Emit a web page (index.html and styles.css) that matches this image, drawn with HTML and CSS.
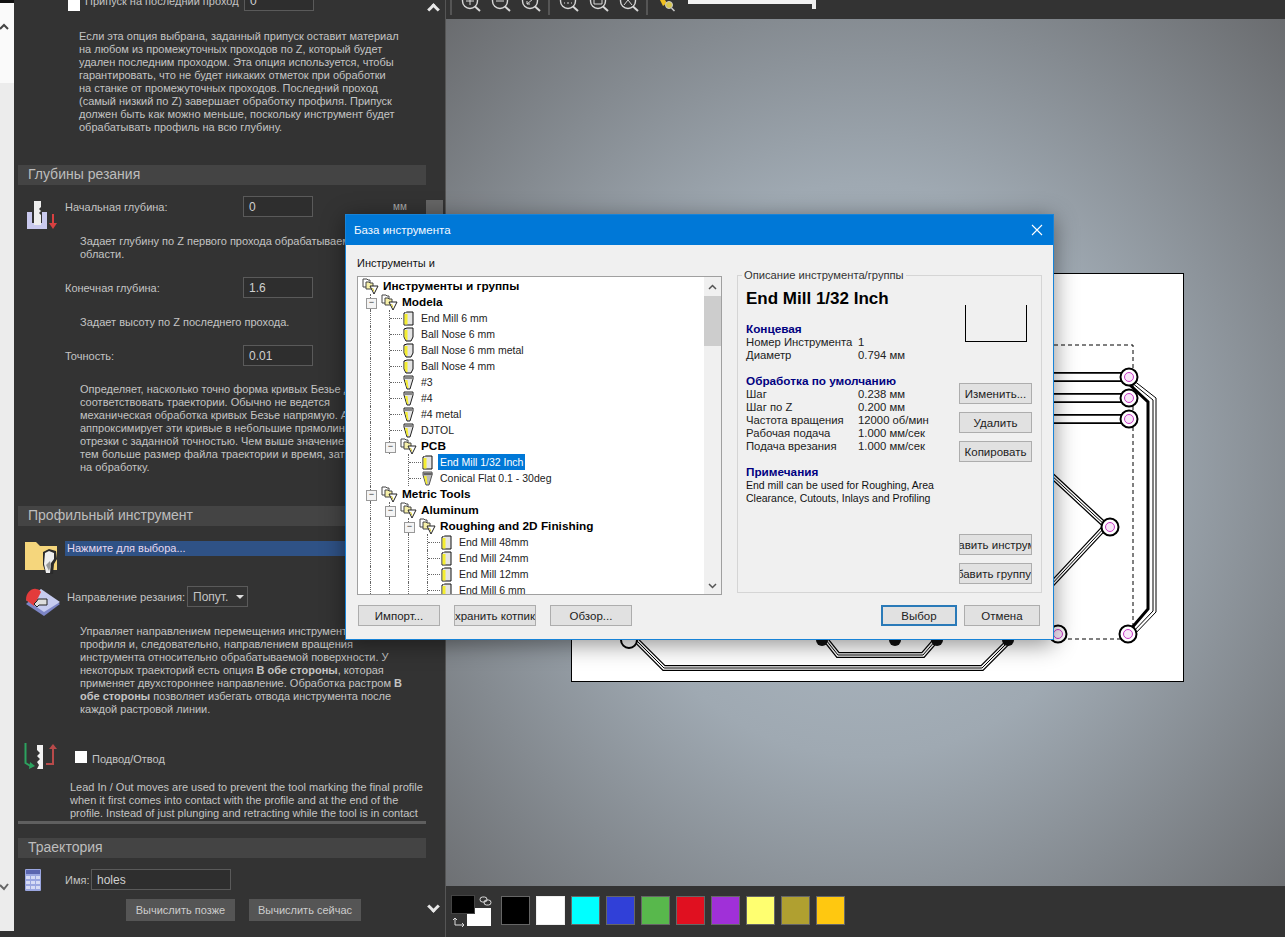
FILE: index.html
```html
<!DOCTYPE html>
<html lang="ru">
<head>
  <meta charset="UTF-8">
  <title>База инструмента</title>
  <link rel="stylesheet" href="styles.css">
</head>
<body>

<!-- shared tree icons -->
<svg class="defs" width="0" height="0">
  <symbol id="ico-group" viewBox="0 0 17 17">
    <path d="M1 1h4l1 1h2v7H1z" fill="#fff" stroke="#444"/>
    <path d="M4 4h3l1 1h3v6H4z" fill="#f6f0a8" stroke="#444"/>
    <path d="M8 8h8l-4 8z" fill="#fff" stroke="#222"/>
    <path d="M10.500 10l1.500 3.500" stroke="#d8c820"/>
  </symbol>
  <symbol id="ico-mill" viewBox="0 0 11 15">
    <path d="M1 2l3-1 6 0v13H1z" fill="#e4e4e4" stroke="#111"/>
    <path d="M1.500 3h3v10.500h-3z" fill="#f5ee30"/>
    <path d="M2 1.500h4" stroke="#777"/>
  </symbol>
  <symbol id="ico-ball" viewBox="0 0 11 15">
    <path d="M1 2l3-1 6 0v9l-2 4H3l-2-4z" fill="#e4e4e4" stroke="#111"/>
    <path d="M1.500 3h3v10h-1.500l-1.500-3z" fill="#f5ee30"/>
  </symbol>
  <symbol id="ico-cone" viewBox="0 0 11 15">
    <path d="M1 1h9v3l-3 10H4L1 4z" fill="#e4e4e4" stroke="#222"/>
    <path d="M1.500 2h9v2h-9z" fill="#888"/>
    <path d="M2 5l2 8h1.500L4.500 5z" fill="#f5ee30"/>
  </symbol>
  <symbol id="ico-cone-grey" viewBox="0 0 11 15">
    <path d="M1 1h9v3l-3 10H4L1 4z" fill="#bbb" stroke="#555"/>
    <path d="M1.500 2h9v2h-9z" fill="#666"/>
    <path d="M2 5l2 8h1.500L4.500 5z" fill="#f5ee30"/>
  </symbol>
  <symbol id="ico-zoom" viewBox="0 0 22 19">
    <circle cx="10" cy="1" r="7.500" fill="none" stroke="#d8d8d8" stroke-width="1.400"/>
    <path d="M15 6.500l5 4.500" stroke="#d8d8d8" stroke-width="2"/>
  </symbol>
</svg>

<div class="strip">
  <div class="strip-top"></div>
  <div class="strip-white">
    <svg class="strip-up" width="10" height="7" viewBox="0 0 10 7"><path d="M0 6l4-4 4 4" fill="none" stroke="#444" stroke-width="2"/></svg>
  </div>
  <div class="strip-grey">
    <svg class="strip-tick" width="10" height="8" viewBox="0 0 10 8"><path d="M0 2l4 4 4-5" fill="none" stroke="#666" stroke-width="2"/></svg>
  </div>
</div>

<aside class="panel">
  <div class="form">
    <div class="row row-first">
      <span class="check check-pass"></span>
      <span class="pass-label">Припуск на последний проход</span>
      <span class="field">0</span>
    </div>

    <p class="note note-top">Если эта опция выбрана, заданный припуск оставит материал<br>
    на любом из промежуточных проходов по Z, который будет<br>
    удален последним проходом. Эта опция используется, чтобы<br>
    гарантировать, что не будет никаких отметок при обработки<br>
    на станке от промежуточных проходов. Последний проход<br>
    (самый низкий по Z) завершает обработку профиля. Припуск<br>
    должен быть как можно меньше, поскольку инструмент будет<br>
    обрабатывать профиль на всю глубину.</p>

    <h3 class="bar bar-depth">Глубины резания</h3>

    <div class="row row-start">
      <svg class="row-icon icon-depth" width="32" height="30" viewBox="0 0 32 30" preserveAspectRatio="xMinYMin">
        <path d="M1 12h5v11h10V12h5v17H1z" fill="#c9c9ee"/>
        <path d="M8 1h7v6l-2 2 2 2-2 2 2 2v10H8z" fill="#eee"/>
        <path d="M27 14v12" stroke="#d84040" stroke-width="2"/>
        <path d="M23 23l4 6 4-6z" fill="#d84040"/>
      </svg>
      <label class="row-label">Начальная глубина:</label>
      <span class="field">0</span>
      <span class="unit">мм</span>
    </div>
    <p class="note note-a">Задает глубину по Z первого прохода обрабатываемой<br>области.</p>

    <div class="row row-end">
      <span class="row-icon"></span>
      <label class="row-label">Конечная глубина:</label>
      <span class="field">1.6</span>
    </div>
    <p class="note note-a">Задает высоту по Z последнего прохода.</p>

    <div class="row row-tol">
      <span class="row-icon"></span>
      <label class="row-label">Точность:</label>
      <span class="field">0.01</span>
    </div>
    <p class="note note-b">Определяет, насколько точно форма кривых Безье должна<br>
    соответствовать траектории. Обычно не ведется<br>
    механическая обработка кривых Безье напрямую. А<br>
    аппроксимирует эти кривые в небольшие прямолинейные<br>
    отрезки с заданной точностью. Чем выше значение,<br>
    тем больше размер файла траектории и время, затраченное<br>
    на обработку.</p>

    <h3 class="bar bar-tool">Профильный инструмент</h3>

    <div class="row row-pick">
      <svg class="row-icon" width="33" height="35" viewBox="0 0 33 35" preserveAspectRatio="xMinYMin">
        <path d="M0 1h11l4 4h17v24H0z" fill="#f5d67c"/>
        <path d="M18 11l6-3 7 2 1 8-3 5-1 10h-7l-3-9z" fill="#2a2a2a"/>
        <path d="M20 12l4-2 5 2 0 6-3 4-1 10h-4l-2-9z" fill="#eee"/>
        <path d="M21 24l4-4 1 4-2 6z" fill="#999"/>
      </svg>
      <div class="pick">Нажмите для выбора...</div>
    </div>

    <div class="row row-dir">
      <svg class="row-icon" width="35" height="29" viewBox="0 0 35 29" preserveAspectRatio="xMinYMin">
        <path d="M0 16l15-13 19 13-16 12z" fill="#7d86c6"/>
        <path d="M0 12l15-11 19 13-16 10z" fill="#c6cbef"/>
        <path d="M0 12c0-8 6-12 10-11 2 0 4 1 5 3L8 18z" fill="#e33b3b"/>
        <path d="M12 11h9v6h-8l-2 2-3-3 3-3z" fill="#ddd" stroke="#222"/>
      </svg>
      <label class="dir-label">Направление резания:</label>
      <span class="select">Попут.<i class="caret"></i></span>
    </div>
    <p class="note">Управляет направлением перемещения инструмента вдоль<br>
    профиля и, следовательно, направлением вращения<br>
    инструмента относительно обрабатываемой поверхности. У<br>
    некоторых траекторий есть опция <b>В обе стороны</b>, которая<br>
    применяет двухстороннее направление. Обработка растром <b>В</b><br>
    <b>обе стороны</b> позволяет избегать отвода инструмента после<br>
    каждой растровой линии.</p>

    <div class="row row-lead">
      <svg class="row-icon" width="33" height="27" viewBox="0 0 33 27" preserveAspectRatio="xMinYMin">
        <path d="M1.500 0v20l5 3" fill="none" stroke="#2ca25f" stroke-width="2"/>
        <path d="M6 19l5 4-6 3z" fill="#2ca25f"/>
        <path d="M13 2h6v24h-6l2-4-2-3 3-3-3-3 3-3-3-3z" fill="#f2f2f2"/>
        <path d="M22 21h7V4" fill="none" stroke="#b84a4a" stroke-width="2"/>
        <path d="M25 6l4-5 4 5z" fill="#b84a4a"/>
      </svg>
      <span class="check check-lead"></span>
      <span class="lead-label">Подвод/Отвод</span>
    </div>
    <p class="note note-lead">Lead In / Out moves are used to prevent the tool marking the final profile<br>
    when it first comes into contact with the profile and at the end of the<br>
    profile. Instead of just plunging and retracting while the tool is in contact</p>
    <div class="rule"></div>

    <h3 class="bar bar-path">Траектория</h3>
    <div class="row row-name">
      <svg class="row-icon" width="16" height="22" viewBox="0 0 16 22">
        <rect width="16" height="22" rx="1" fill="#9aa6e0"/>
        <rect x="1" y="1" width="14" height="4" fill="#5b66b0"/>
        <path d="M1 7h4v3H1zm5 0h4v3H6zm5 0h4v3h-4zM1 12h4v3H1zm5 0h4v3H6zm5 0h4v3h-4zM1 17h4v3H1zm5 0h4v3H6zm5 0h4v3h-4z" fill="#d6dbf5"/>
      </svg>
      <label class="name-label">Имя:</label>
      <span class="field field-name">holes</span>
    </div>
    <div class="calc-btns">
      <span class="dark-btn">Вычислить позже</span>
      <span class="dark-btn">Вычислить сейчас</span>
    </div>
  </div>

  <div class="panel-scroll">
    <span class="chev chev-up"></span>
    <span class="thumb"></span>
    <span class="chev chev-down"></span>
  </div>
</aside>

<main class="main">
  <div class="toolbar">
    <i class="tool-sep"></i>
    <svg class="zoom-ico" width="22" height="19"><use href="#ico-zoom"/><path d="M6 1h8M10 0v5" stroke="#d8d8d8"/></svg>
    <svg class="zoom-ico" width="22" height="19"><use href="#ico-zoom"/><path d="M6 1h8" stroke="#d8d8d8"/></svg>
    <svg class="zoom-ico" width="22" height="19"><use href="#ico-zoom"/><path d="M7 4l6-5M7 1v3h3" fill="none" stroke="#d8d8d8"/></svg>
    <i class="tool-sep sep-tight"></i>
    <svg class="zoom-ico" width="22" height="19"><use href="#ico-zoom"/><path d="M6 3h1M9 3h2M13 3h1" stroke="#d8d8d8"/></svg>
    <svg class="zoom-ico" width="22" height="19"><use href="#ico-zoom"/><path d="M6 0v4h8V0" fill="none" stroke="#d8d8d8"/></svg>
    <svg class="zoom-ico" width="22" height="19"><use href="#ico-zoom"/><path d="M6 5l4-5 4 5" fill="none" stroke="#d8d8d8"/></svg>
    <i class="tool-sep sep-tight"></i>
    <svg class="layer-ico" width="16" height="12" viewBox="0 0 16 12">
      <path d="M1 0h5l2 3-4 3z" fill="#f0c020"/>
      <circle cx="10" cy="5" r="3.500" fill="#d8c850" stroke="#ccc"/>
      <path d="M12.500 8l3 3" stroke="#ccc" stroke-width="1.500"/>
    </svg>
    <div class="slider"><i class="slider-thumb"></i></div>
  </div>

  <div class="canvas">
    <div class="sheet">
      <svg width="612" height="408" viewBox="571 273 612 408">
        <!-- job outline -->
        <path d="M1054 345H1133V639H620" fill="none" stroke="#000" stroke-dasharray="4 3"/>
        <!-- horizontal tracks -->
        <g fill="none" stroke="#000" stroke-width="10">
          <path d="M1050 377H1129"/>
          <path d="M1050 398H1129"/>
          <path d="M1050 419H1129"/>
        </g>
        <g fill="none" stroke="#fff" stroke-width="6.500">
          <path d="M1050 377H1129"/>
          <path d="M1050 398H1129"/>
          <path d="M1050 419H1129"/>
        </g>
        <!-- long track down the right side -->
        <g fill="none" stroke="#000">
          <path d="M1133 380L1156 398V612L1133 636"/>
          <path d="M1131 382L1153 400V611L1131 634"/>
          <path d="M1130 385L1148 402V609L1130 630" stroke-width="3"/>
        </g>
        <g fill="none" stroke="#000" stroke-width="6">
          <path d="M1050 474L1106 526L1050 586"/>
          <path d="M636 640L664 668H982L1010 640"/>
          <path d="M826 640L838 655H923L936 640"/>
        </g>
        <g fill="none" stroke="#fff" stroke-width="3.500">
          <path d="M1050 474L1106 526L1050 586"/>
          <path d="M636 640L664 668H982L1010 640"/>
          <path d="M826 640L838 655H923L936 640"/>
        </g>
        <g fill="none" stroke="#000" stroke-width="1">
          <path d="M1050 474L1106 526L1050 586"/>
          <path d="M636 640L664 668H982L1010 640"/>
          <path d="M826 640L838 655H923L936 640"/>
        </g>
        <g fill="#111">
          <circle cx="822" cy="640" r="6"/>
          <circle cx="895" cy="640" r="6"/>
          <circle cx="937" cy="640" r="6"/>
          <circle cx="1008" cy="640" r="6"/>
        </g>
        <g fill="#fff" stroke="#000" stroke-width="2">
          <circle cx="1129" cy="377" r="8.500"/>
          <circle cx="1129" cy="398" r="8.500"/>
          <circle cx="1129" cy="419" r="8.500"/>
          <circle cx="1110" cy="527" r="8.500"/>
          <circle cx="1128" cy="634" r="8.500"/>
          <circle cx="1058" cy="634" r="8.500"/>
          <circle cx="629" cy="640" r="8"/>
        </g>
        <g fill="#f8e8f8" stroke="#c838c8">
          <circle cx="1129" cy="377" r="4.500"/>
          <circle cx="1129" cy="398" r="4.500"/>
          <circle cx="1129" cy="419" r="4.500"/>
          <circle cx="1110" cy="527" r="4.500"/>
          <circle cx="1128" cy="634" r="4.500"/>
          <circle cx="1058" cy="634" r="4.500"/>
        </g>
      </svg>
    </div>
  </div>

  <div class="footer">
    <div class="colors">
      <span class="col-fg"></span>
      <span class="col-bg"></span>
      <svg class="col-link" width="13" height="10" viewBox="0 0 13 10">
        <rect x="1" y="1" width="7" height="5" rx="2.500" fill="none" stroke="#ddd"/>
        <rect x="5" y="4" width="7" height="5" rx="2.500" fill="none" stroke="#ddd"/>
      </svg>
      <svg class="col-swap" width="13" height="10" viewBox="0 0 13 10">
        <path d="M3 2v6h9M1 3l2-2 2 2M10 6l2 2-2 2" fill="none" stroke="#ddd"/>
      </svg>
    </div>
    <div class="swatches">
      <span class="swatch sw-black"></span>
      <span class="swatch sw-white"></span>
      <span class="swatch sw-cyan"></span>
      <span class="swatch sw-blue"></span>
      <span class="swatch sw-green"></span>
      <span class="swatch sw-red"></span>
      <span class="swatch sw-purple"></span>
      <span class="swatch sw-yellow"></span>
      <span class="swatch sw-olive"></span>
      <span class="swatch sw-gold"></span>
    </div>
  </div>
</main>

<section class="dialog">
  <header class="dlg-title">
    <span>База инструмента</span>
    <svg class="dlg-close" width="12" height="12" viewBox="0 0 12 12">
      <path d="M1 1l10 10M11 1L1 11" stroke="#fff" stroke-width="1.100"/>
    </svg>
  </header>

  <div class="dlg-body">
    <div class="dlg-left">
      <div class="tree-caption">Инструменты и</div>
      <div class="tree">
        <div class="tree-rows">
          <div class="node group"><svg class="ig"><use href="#ico-group"/></svg><span>Инструменты и группы</span></div>
          <div class="node group"><i class="cell exp"></i><svg class="ig"><use href="#ico-group"/></svg><span>Modela</span></div>
          <div class="node"><i class="cell v"></i><i class="cell tee"></i><svg class="it"><use href="#ico-mill"/></svg><span>End Mill 6 mm</span></div>
          <div class="node"><i class="cell v"></i><i class="cell tee"></i><svg class="it"><use href="#ico-ball"/></svg><span>Ball Nose 6 mm</span></div>
          <div class="node"><i class="cell v"></i><i class="cell tee"></i><svg class="it"><use href="#ico-ball"/></svg><span>Ball Nose 6 mm metal</span></div>
          <div class="node"><i class="cell v"></i><i class="cell tee"></i><svg class="it"><use href="#ico-ball"/></svg><span>Ball Nose 4 mm</span></div>
          <div class="node"><i class="cell v"></i><i class="cell tee"></i><svg class="it"><use href="#ico-cone"/></svg><span>#3</span></div>
          <div class="node"><i class="cell v"></i><i class="cell tee"></i><svg class="it"><use href="#ico-cone"/></svg><span>#4</span></div>
          <div class="node"><i class="cell v"></i><i class="cell tee"></i><svg class="it"><use href="#ico-cone"/></svg><span>#4 metal</span></div>
          <div class="node"><i class="cell v"></i><i class="cell tee"></i><svg class="it"><use href="#ico-cone"/></svg><span>DJTOL</span></div>
          <div class="node group"><i class="cell v"></i><i class="cell exp"></i><svg class="ig"><use href="#ico-group"/></svg><span>PCB</span></div>
          <div class="node"><i class="cell v"></i><i class="cell"></i><i class="cell tee"></i><svg class="it"><use href="#ico-mill"/></svg><span class="selected">End Mill 1/32 Inch</span></div>
          <div class="node"><i class="cell v"></i><i class="cell"></i><i class="cell tee"></i><svg class="it"><use href="#ico-cone-grey"/></svg><span>Conical Flat 0.1 - 30deg</span></div>
          <div class="node group"><i class="cell exp"></i><svg class="ig"><use href="#ico-group"/></svg><span>Metric Tools</span></div>
          <div class="node group"><i class="cell v"></i><i class="cell exp"></i><svg class="ig"><use href="#ico-group"/></svg><span>Aluminum</span></div>
          <div class="node group"><i class="cell v"></i><i class="cell v"></i><i class="cell exp"></i><svg class="ig"><use href="#ico-group"/></svg><span>Roughing and 2D Finishing</span></div>
          <div class="node"><i class="cell v"></i><i class="cell v"></i><i class="cell v"></i><i class="cell tee"></i><svg class="it"><use href="#ico-mill"/></svg><span>End Mill 48mm</span></div>
          <div class="node"><i class="cell v"></i><i class="cell v"></i><i class="cell v"></i><i class="cell tee"></i><svg class="it"><use href="#ico-mill"/></svg><span>End Mill 24mm</span></div>
          <div class="node"><i class="cell v"></i><i class="cell v"></i><i class="cell v"></i><i class="cell tee"></i><svg class="it"><use href="#ico-mill"/></svg><span>End Mill 12mm</span></div>
          <div class="node"><i class="cell v"></i><i class="cell v"></i><i class="cell v"></i><i class="cell tee"></i><svg class="it"><use href="#ico-mill"/></svg><span>End Mill 6 mm</span></div>
        </div>
        <div class="tree-scroll">
          <svg width="17" height="17" viewBox="0 0 17 17"><path d="M5 10l3.500-3.500L12 10" fill="none" stroke="#555" stroke-width="1.500"/></svg>
          <i class="tree-thumb"></i>
          <svg class="tree-down" width="17" height="17" viewBox="0 0 17 17"><path d="M5 7l3.500 3.500L12 7" fill="none" stroke="#555" stroke-width="1.500"/></svg>
        </div>
      </div>
    </div>

    <fieldset class="info">
      <legend>Описание инструмента/группы</legend>
      <div class="info-text">
        <h2>End Mill 1/32 Inch</h2>
        <h4>Концевая</h4>
        <div class="kv"><span>Номер Инструмента</span><span>1</span></div>
        <div class="kv"><span>Диаметр</span><span>0.794 мм</span></div>
        <h4>Обработка по умолчанию</h4>
        <div class="kv"><span>Шаг</span><span>0.238 мм</span></div>
        <div class="kv"><span>Шаг по Z</span><span>0.200 мм</span></div>
        <div class="kv"><span>Частота вращения</span><span>12000 об/мин</span></div>
        <div class="kv"><span>Рабочая подача</span><span>1.000 мм/сек</span></div>
        <div class="kv"><span>Подача врезания</span><span>1.000 мм/сек</span></div>
        <h4>Примечания</h4>
        <p>End mill can be used for Roughing, Area<br>Clearance, Cutouts, Inlays and Profiling</p>
      </div>
      <div class="info-side">
        <div class="tool-shape"></div>
        <span class="btn btn-side btn-edit">Изменить...</span>
        <span class="btn btn-side">Удалить</span>
        <span class="btn btn-side">Копировать</span>
        <span class="btn btn-side btn-add">Добавить инструмент</span>
        <span class="btn btn-side btn-end">Добавить группу</span>
      </div>
    </fieldset>
  </div>

  <div class="dlg-actions">
    <span class="btn btn-low">Импорт...</span>
    <span class="btn btn-low btn-end">Сохранить котпик</span>
    <span class="btn btn-low">Обзор...</span>
    <span class="btn btn-low btn-ok">Выбор</span>
    <span class="btn btn-low">Отмена</span>
  </div>
</section>

</body>
</html>
```

FILE: styles.css
```css
* {
  box-sizing: border-box;
}

html, body {
  margin: 0;
  height: 100%;
}

body {
  width: 1285px;
  height: 937px;
  display: flex;
  overflow: hidden;
  position: relative;
  background: #333;
  font-family: "Liberation Sans", Arial, sans-serif;
  font-size: 11px;
  color: #c4c4c4;
}

.defs {
  position: absolute;
}

/* far left sliver of the other window */
.strip {
  width: 14px;
  height: 931px;
  display: flex;
  flex-direction: column;
  flex: none;
}

.strip-top {
  height: 3px;
  background: #111;
}

.strip-white {
  height: 80px;
  padding-top: 20px;
  background: #fafafa;
}

.strip-grey {
  flex: 1;
  padding-top: 800px;
  background: #ececec;
}

.strip-up,
.strip-tick {
  display: block;
}

/* left panel */
.panel {
  width: 432px;
  flex: none;
  display: flex;
  background: #333;
  overflow: hidden;
}

.form {
  width: 412px;
  padding-left: 4px;
  flex: none;
}

.panel-scroll {
  width: 20px;
  border-right: 1px solid #555;
  position: relative;
}

.chev {
  position: absolute;
  left: 3px;
  width: 9px;
  height: 9px;
  border-top: 3px solid #e8e8e8;
  border-left: 3px solid #e8e8e8;
  transform: rotate(45deg);
}

.chev-up {
  top: 5px;
}

.chev-down {
  top: 902px;
  transform: rotate(225deg);
}

.thumb {
  position: absolute;
  left: 0;
  top: 200px;
  width: 17px;
  height: 90px;
  background: #666;
}

.row {
  display: flex;
  align-items: center;
  height: 21px;
}

.row-first {
  margin-top: -10px;
  padding-left: 50px;
}

.row-start {
  margin-top: 11px;
}

.row-end {
  margin-top: 16px;
}

.row-tol {
  margin-top: 16px;
}

.row-icon {
  width: 40px;
  margin-left: 7px;
  flex: none;
  align-self: flex-start;
}

.icon-depth {
  margin-top: 4px;
  margin-left: 8px;
  width: 39px;
}

.row-label {
  width: 178px;
  flex: none;
}

.field {
  display: flex;
  align-items: center;
  width: 70px;
  height: 21px;
  padding-left: 5px;
  border: 1px solid #5a5a5a;
  font-size: 12px;
  color: #d0d0d0;
  background: #2e2e2e;
}

.unit {
  margin-left: 80px;
  font-size: 10px;
  color: #aaa;
}

.check {
  width: 12px;
  height: 12px;
  flex: none;
  background: #fff;
}

.check-pass {
  margin-top: 8px;
}

.pass-label {
  width: 159px;
  margin-left: 5px;
}

.note {
  margin: 18px 0 0 62px;
  line-height: 13px;
  white-space: nowrap;
}

.note-top {
  margin: 19px 0 0 61px;
}

.note-b {
  margin-top: 17px;
}

.note-lead {
  margin: 11px 0 0 52px;
}

.bar {
  height: 20px;
  margin: 0;
  padding-left: 10px;
  background: #444;
  font-size: 14px;
  font-weight: 400;
  line-height: 18px;
  color: #bdbdbd;
}

.bar-depth {
  margin-top: 31px;
}

.bar-tool {
  margin-top: 32px;
}

.bar-path {
  margin-top: 14px;
}

.rule {
  height: 3px;
  margin-top: 1px;
  background: #5f5f5f;
}

.row-pick {
  margin-top: 15px;
  height: 15px;
}

.pick {
  flex: 1;
  height: 15px;
  padding-left: 2px;
  line-height: 15px;
  background: #2f5286;
  color: #e6d8ee;
}

.row-dir {
  margin-top: 30px;
}

.row-dir .row-icon {
  margin-top: 2px;
  margin-left: 8px;
  width: 35px;
}

.dir-label {
  width: 120px;
  margin-left: 6px;
  flex: none;
  font-size: 11.200px;
}

.select {
  display: flex;
  align-items: center;
  width: 61px;
  height: 21px;
  padding-left: 5px;
  border: 1px solid #5a5a5a;
  font-size: 12px;
}

.caret {
  width: 0;
  height: 0;
  margin-left: 8px;
  border: 4px solid transparent;
  border-top: 4px solid #ddd;
  border-bottom: 0;
}

.row-lead {
  margin-top: 27px;
  height: 27px;
  align-items: flex-start;
}

.row-lead .row-icon {
  margin-left: 6px;
  width: 33px;
}

.check-lead {
  margin: 8px 0 0 18px;
}

.lead-label {
  margin: 10px 0 0 5px;
}

.row-name {
  margin-top: 11px;
}

.row-name .row-icon {
  width: 16px;
}

.name-label {
  width: 26px;
  margin-left: 24px;
  flex: none;
}

.field-name {
  width: 140px;
}

.calc-btns {
  display: flex;
  gap: 14px;
  margin: 9px 0 0 108px;
}

.dark-btn {
  display: flex;
  align-items: center;
  justify-content: center;
  width: 109px;
  height: 22px;
  background: #555;
  color: #ccc;
}

.dark-btn + .dark-btn {
  width: 112px;
}

/* right side */
.main {
  flex: 1;
  display: flex;
  flex-direction: column;
}

.toolbar {
  height: 19px;
  display: flex;
  align-items: flex-start;
  overflow: hidden;
  background: #333;
  padding-left: 4px;
  gap: 8px;
}

.tool-sep {
  width: 2px;
  height: 15px;
  flex: none;
  background: #555;
}

.sep-tight {
  margin-left: -2px;
}

.zoom-ico {
  flex: none;
}

.layer-ico {
  margin-left: 3px;
  flex: none;
}

.slider {
  position: relative;
  width: 124px;
  height: 4px;
  margin-left: 5px;
  background: #f2f2f2;
}

.slider-thumb {
  position: absolute;
  right: -4px;
  top: 0;
  width: 4px;
  height: 9px;
  background: #eee;
}

.canvas {
  flex: 1;
  position: relative;
  background: radial-gradient(ellipse at 50% 52%, #b1bdc7 0%, #9fa9b2 45%, #6a6c6f 100%);
}

.sheet {
  position: absolute;
  left: 125px;
  top: 254px;
  width: 613px;
  height: 409px;
  background: #fff;
  border: 1px solid #000;
  overflow: hidden;
}

.sheet svg {
  display: block;
  margin: -1px;
}

.footer {
  height: 51px;
  display: flex;
  background: #333;
}

.colors {
  position: relative;
  width: 50px;
  margin-left: 5px;
  flex: none;
}

.col-fg {
  position: absolute;
  left: 0;
  top: 9px;
  width: 24px;
  height: 19px;
  background: #000;
  border: 1px solid #444;
  z-index: 1;
}

.col-bg {
  position: absolute;
  left: 16px;
  top: 22px;
  width: 24px;
  height: 18px;
  background: #fff;
}

.col-link {
  position: absolute;
  left: 28px;
  top: 10px;
}

.col-swap {
  position: absolute;
  left: 1px;
  top: 31px;
}

.swatches {
  display: flex;
  gap: 6px;
  margin-top: 10px;
}

.swatch {
  width: 29px;
  height: 29px;
  border: 1px solid #666;
}

.sw-black { background: #000; }
.sw-white { background: #fff; border-color: #eee; }
.sw-cyan { background: #0ff; }
.sw-blue { background: #3040d8; }
.sw-green { background: #58b84c; }
.sw-red { background: #e01020; }
.sw-purple { background: #a030d8; }
.sw-yellow { background: #ffff70; }
.sw-olive { background: #b0a030; }
.sw-gold { background: #ffc810; }

/* dialog */
.dialog {
  position: absolute;
  left: 345px;
  top: 214px;
  width: 709px;
  height: 426px;
  display: flex;
  flex-direction: column;
  background: #f0f0f0;
  border: 1px solid #1883d7;
  box-shadow: 0 4px 22px rgba(0, 0, 0, 0.45);
  color: #111;
}

.dlg-title {
  height: 30px;
  display: flex;
  align-items: center;
  justify-content: space-between;
  padding: 0 10px 0 8px;
  background: #0078d7;
  color: #f4f8ff;
  font-size: 11.500px;
  flex: none;
}

.dlg-body {
  display: flex;
  gap: 15px;
  padding-left: 11px;
  flex: none;
}

.dlg-left {
  width: 365px;
  flex: none;
}

.tree-caption {
  height: 31px;
  padding-top: 12px;
  line-height: 13px;
}

.tree {
  height: 319px;
  display: flex;
  background: #fff;
  border: 1px solid #a0a0a0;
  overflow: hidden;
}

.tree-rows {
  flex: 1;
  padding: 1px 0 0 3px;
  overflow: hidden;
}

.node {
  display: flex;
  align-items: center;
  height: 16px;
  line-height: 16px;
  font-size: 10.500px;
  white-space: nowrap;
  color: #222;
}

.node span {
  margin-left: 3px;
}

.group {
  font-size: 11.800px;
  font-weight: 700;
  color: #000;
}

.cell {
  position: relative;
  width: 19px;
  height: 16px;
  flex: none;
}

.v::before,
.tee::before,
.exp::before {
  content: "";
  position: absolute;
  left: 9px;
  top: 0;
  bottom: 0;
  border-left: 1px dotted #666;
}

.tee::after {
  content: "";
  position: absolute;
  left: 10px;
  right: -3px;
  top: 8px;
  border-top: 1px dotted #666;
}

.exp::after {
  content: "\2212";
  position: absolute;
  left: 5px;
  top: 4px;
  width: 9px;
  height: 9px;
  border: 1px solid #999;
  background: #f4f4f4;
  color: #333;
  font-size: 9px;
  font-weight: 400;
  line-height: 7px;
  text-align: center;
}

.ig {
  width: 17px;
  height: 17px;
  margin-left: 1px;
  margin-right: 1px;
  flex: none;
}

.it {
  width: 11px;
  height: 15px;
  margin-left: 4px;
  flex: none;
}

.it + span {
  margin-left: 7px;
}

.node .selected {
  margin-left: 5px;
  padding: 0 2px;
  background: #0078d7;
  color: #fff;
}

.tree-scroll {
  position: relative;
  width: 17px;
  flex: none;
  background: #f0f0f0;
}

.tree-scroll svg {
  display: block;
  margin-top: 2px;
}

.tree-thumb {
  display: block;
  height: 50px;
  background: #cdcdcd;
}

.tree-scroll .tree-down {
  position: absolute;
  left: 0;
  bottom: 0;
}

.info {
  width: 305px;
  height: 324px;
  margin: 24px 0 0;
  padding: 0 9px 0 8px;
  display: flex;
  justify-content: space-between;
  border: 1px solid #d5d5d5;
  min-inline-size: 0;
}

.info legend {
  margin-left: -4px;
  padding: 0 2px;
  line-height: 13px;
  font-size: 11.200px;
  color: #333;
}

.info-text {
  width: 205px;
  line-height: 13px;
}

.info-text h2 {
  margin: 7px 0 0;
  font-size: 17px;
  line-height: 20px;
  color: #000;
}

.info-text h4 {
  margin: 13px 0 1px;
  font-size: 11.750px;
  font-weight: 700;
  color: #000080;
}

.info-text .kv + h4 {
  margin-top: 12px;
}

.info-text p {
  margin: 0;
  font-size: 10.500px;
}

.kv {
  display: grid;
  grid-template-columns: 112px 1fr;
  font-size: 11.300px;
  color: #222;
}

.info-side {
  width: 73px;
  display: flex;
  flex-direction: column;
  align-items: stretch;
}

.tool-shape {
  width: 62px;
  height: 37px;
  margin: 23px 0 0 6px;
  border: 1px solid #000;
  border-top: 0;
}

.btn {
  display: flex;
  align-items: center;
  justify-content: center;
  height: 21px;
  background: #e1e1e1;
  border: 1px solid #adadad;
  color: #222;
  font-size: 11.500px;
  white-space: nowrap;
  overflow: hidden;
  flex: none;
}

.btn-end {
  justify-content: flex-end;
}

.btn-side {
  margin-top: 8px;
}

.btn-edit {
  margin-top: 41px;
}

.btn-add {
  margin-top: 72px;
}

.dlg-actions {
  display: flex;
  gap: 14px;
  margin-top: 10px;
  padding-left: 12px;
}

.btn-low {
  width: 82px;
}

.btn-ok {
  width: 76px;
  margin-left: 235px;
  border: 2px solid #2a7ab8;
}

.btn-ok + .btn-low {
  width: 76px;
  margin-left: -7px;
}
```
